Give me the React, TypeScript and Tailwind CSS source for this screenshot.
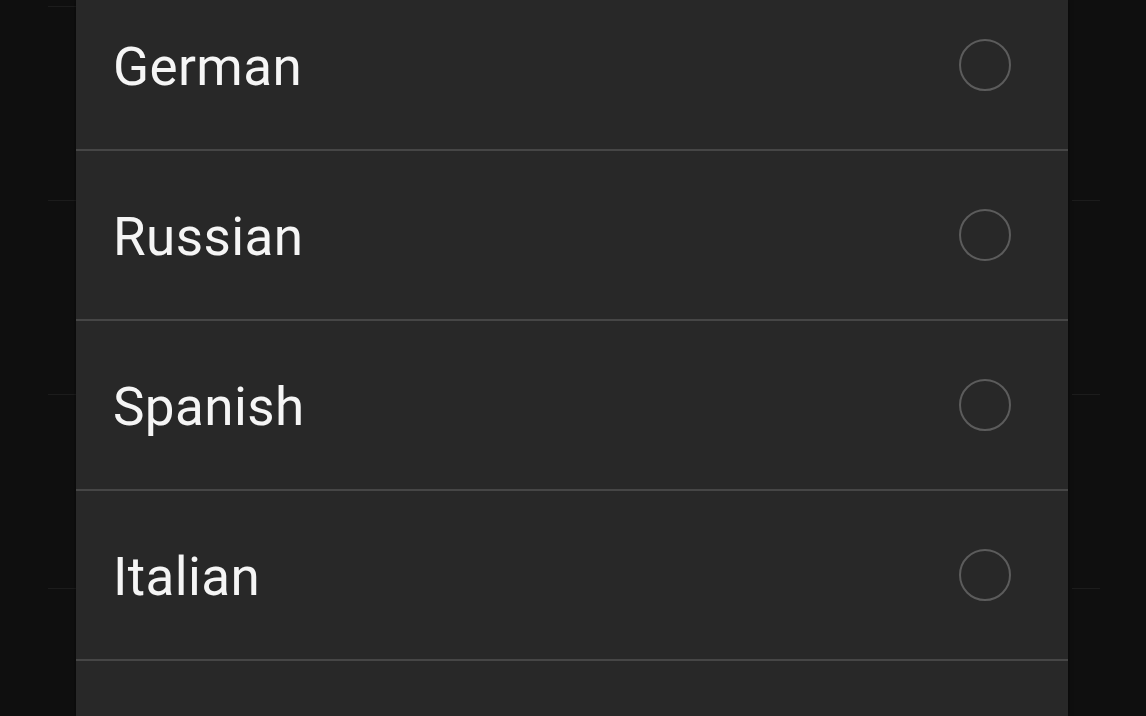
import React from "react";

const langs = ["German", "Russian", "Spanish", "Italian", ""];

function Gutter({ tops }: { tops: number[] }) {
  return (
    <div className="w-[28px] flex flex-col">
      {tops.map((t, i) => (
        <div key={i} className="h-px bg-[#1c1c1c]" style={{ marginTop: t }} />
      ))}
    </div>
  );
}

export default function App() {
  return (
    <div className="w-[1146px] h-[716px] overflow-hidden bg-[#0f0f0f] flex" style={{ fontFamily: "Roboto, 'Noto Sans', sans-serif" }}>
      <div className="w-[76px] pl-[48px] flex">
        <Gutter tops={[6, 193, 193, 193]} />
      </div>
      <div className="w-[992px] h-full bg-[#282828] shadow-[0_0_4px_rgba(0,0,0,0.6)] flex flex-col">
        <div className="-mt-[19px] flex flex-col">
          {langs.map((l, i) => (
            <div key={i} className="h-[170px] shrink-0 flex items-center border-b-2 border-[#464646] pl-[37px] pr-[57px]">
              <span className="flex-1 pt-[5px] text-[53px] leading-none text-[#f5f5f5] tracking-[0.4px]">{l}</span>
              {l && (
                <span className="w-[52px] h-[52px] rounded-full border-[2.5px] border-[#5c5c5c]" />
              )}
            </div>
          ))}
        </div>
      </div>
      <div className="pl-[4px] flex">
        <Gutter tops={[200, 193, 193]} />
      </div>
    </div>
  );
}
